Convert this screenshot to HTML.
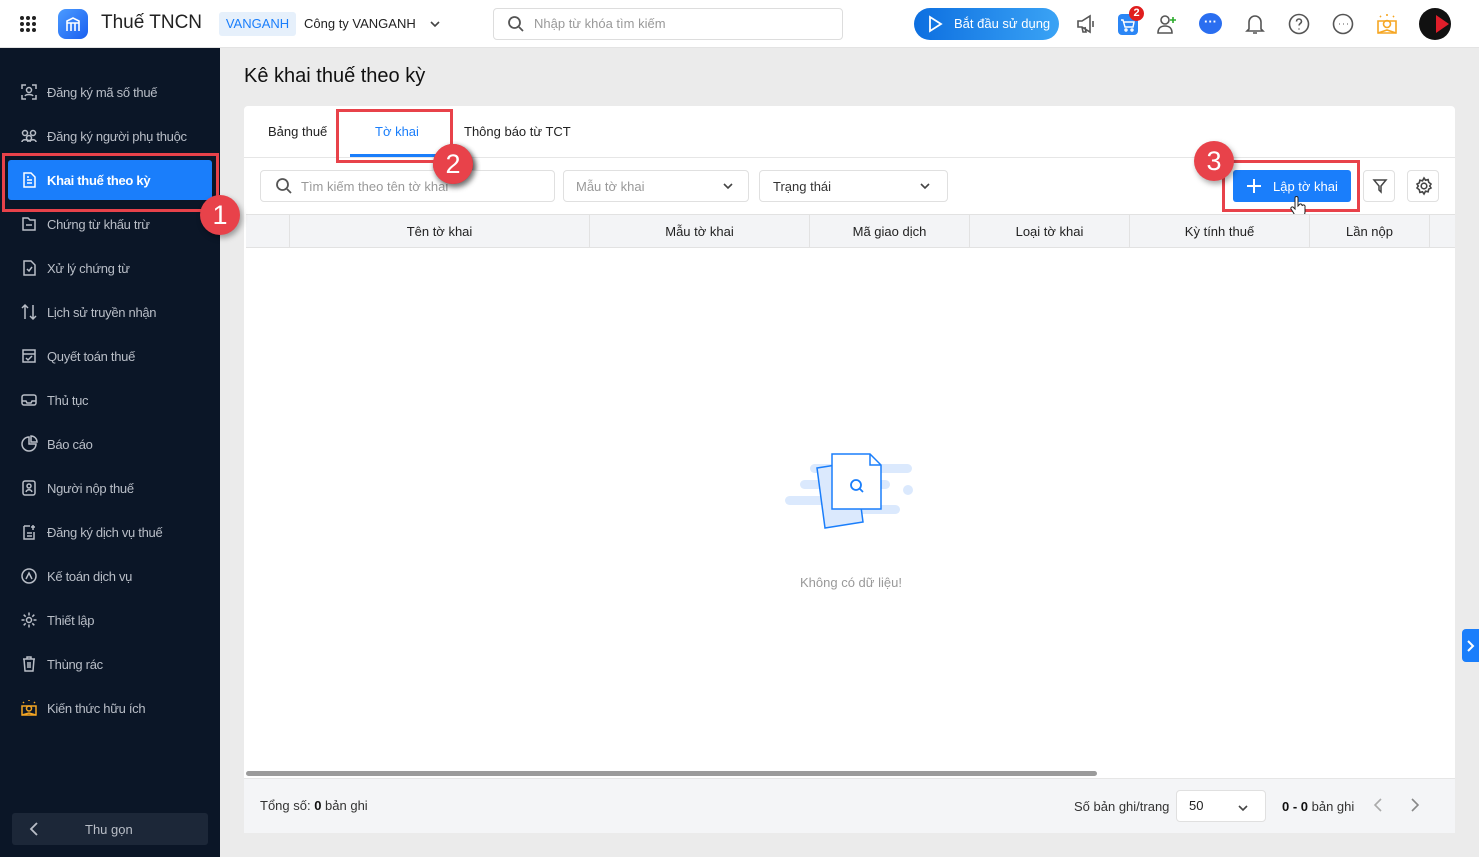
<!DOCTYPE html>
<html><head><meta charset="utf-8"><style>
*{box-sizing:border-box;margin:0;padding:0}
body{width:1479px;height:857px;overflow:hidden;background:#ebebeb;font-family:"Liberation Sans",sans-serif;font-size:13px;color:#222;position:relative}
.abs{position:absolute}
.hdr{left:0;top:0;width:1479px;height:48px;background:#fff;border-bottom:1px solid #e3e3e3}
.side{left:0;top:48px;width:220px;height:809px;background:#0b1627}
.it{position:absolute;left:20px;color:#b9bec7;font-size:13px;display:flex;align-items:center;letter-spacing:-0.3px}
.it svg{width:18px;height:18px;margin-right:9px;fill:none;stroke:#b9bec7;stroke-width:1.5}
.card{left:244px;top:106px;width:1211px;height:727px;background:#fff;border-radius:4px}
.inp{position:absolute;top:170px;height:32px;border:1px solid #e0e0e0;border-radius:4px;background:#fff;color:#999;font-size:13px;display:flex;align-items:center}
.th{position:absolute;top:214px;height:34px;border-left:1px solid #e2e2e2;display:flex;align-items:center;justify-content:center;font-size:13px;color:#222}
.red{position:absolute;border:3px solid #e8424a}
.badge{position:absolute;width:40px;height:40px;border-radius:50%;background:#e8424a;color:#fff;font-size:27px;display:flex;align-items:center;justify-content:center;box-shadow:2px 3px 6px rgba(0,0,0,.35)}
.ic{position:absolute;top:12px;width:24px;height:24px;fill:none;stroke:#555;stroke-width:1.6}
</style></head><body>
<div class="abs hdr"></div>
<!-- grid icon -->
<svg class="abs" style="left:19px;top:15px" width="18" height="18"><g fill="#222"><circle cx="3" cy="3" r="2"/><circle cx="9" cy="3" r="2"/><circle cx="15" cy="3" r="2"/><circle cx="3" cy="9" r="2"/><circle cx="9" cy="9" r="2"/><circle cx="15" cy="9" r="2"/><circle cx="3" cy="15" r="2"/><circle cx="9" cy="15" r="2"/><circle cx="15" cy="15" r="2"/></g></svg>
<div class="abs" style="left:58px;top:9px;width:30px;height:30px;border-radius:8px;background:linear-gradient(135deg,#4b9bff,#1a5ff0)"></div>
<svg class="abs" style="left:64px;top:15px" width="18" height="18" fill="none" stroke="#fff" stroke-width="1.6"><path d="M3 16V6l6-3 6 3v10M7 16V8M11 16V8M3 8h12"/></svg>
<div class="abs" style="left:101px;top:12px;font-size:19px;color:#222">Thuế TNCN</div>
<div class="abs" style="left:219px;top:12px;width:77px;height:24px;background:#e6f0fb;border-radius:3px;color:#1a7efb;font-size:13px;text-align:center;line-height:24px">VANGANH</div>
<div class="abs" style="left:304px;top:16px;font-size:13px;color:#222">Công ty VANGANH</div>
<svg class="abs" style="left:429px;top:18px" width="12" height="12" fill="none" stroke="#444" stroke-width="1.6"><path d="M2 4l4 4 4-4"/></svg>
<div class="abs" style="left:493px;top:8px;width:350px;height:32px;border:1px solid #ddd;border-radius:4px"></div>
<svg class="abs" style="left:507px;top:15px" width="18" height="18" fill="none" stroke="#555" stroke-width="1.8"><circle cx="7.5" cy="7.5" r="5.5"/><path d="M12 12l4 4"/></svg>
<div class="abs" style="left:534px;top:16px;color:#999;font-size:13px">Nhập từ khóa tìm kiếm</div>
<div class="abs" style="left:914px;top:8px;width:145px;height:32px;border-radius:16px;background:linear-gradient(90deg,#0d6fe0,#3aa3f5)"></div>
<svg class="abs" style="left:926px;top:15px" width="18" height="18" fill="none" stroke="#fff" stroke-width="1.8"><path d="M4 2l11 7-11 7z"/></svg>
<div class="abs" style="left:954px;top:16px;color:#fff;font-size:13px">Bắt đầu sử dụng</div>
<svg class="ic" style="left:1075px"><path d="M3 9h4l8-5v16l-8-5H3zM7 15l1 5h3l-1-5M18 9v6"/></svg>
<div class="abs" style="left:1118px;top:14px;width:20px;height:21px;border-radius:4px;background:#2b86f5"></div>
<svg class="abs" style="left:1120px;top:17px" width="16" height="16" fill="none" stroke="#fff" stroke-width="1.4"><path d="M1 3h2l2 7h8l1-5H4"/><circle cx="6" cy="13" r="1"/><circle cx="12" cy="13" r="1"/></svg>
<div class="abs" style="left:1129px;top:6px;width:15px;height:15px;border-radius:50%;background:#e01e1e;color:#fff;font-size:11px;font-weight:bold;text-align:center;line-height:15px">2</div>
<svg class="ic" style="left:1155px"><circle cx="10" cy="8" r="4"/><path d="M3 21c0-5 3-7 7-7s7 2 7 7z"/><path d="M18 5v6M15 8h6" stroke="#2bab2b"/></svg>
<div class="abs" style="left:1199px;top:13px;width:23px;height:21px;border-radius:50%;background:#2a6ef0"></div>
<div class="abs" style="left:1204px;top:14px;color:#fff;font-size:13px;font-weight:bold">···</div>
<svg class="ic" style="left:1243px"><path d="M6 17V10a6 6 0 0112 0v7l2 2H4zM10 21h4"/></svg>
<svg class="ic" style="left:1287px"><circle cx="12" cy="12" r="9.5"/><path d="M9.5 9.5a2.5 2.5 0 115 0c0 2-2.5 2-2.5 4M12 16.5v1"/></svg>
<svg class="ic" style="left:1331px"><circle cx="12" cy="12" r="9.5"/><path d="M8 12h.5M12 12h.5M16 12h.5" stroke-width="2"/></svg>
<svg class="ic" style="left:1375px;stroke:#f5a623"><path d="M3 9h18v12H3zM12 4V2M6 5l-1-1M18 5l1-1"/><circle cx="12" cy="12" r="3.5"/><path d="M3 21l9-3 9 3"/></svg>
<div class="abs" style="left:1419px;top:8px;width:32px;height:32px;border-radius:50%;background:#111;overflow:hidden"><div style="position:absolute;left:17px;top:7px;width:0;height:0;border-left:13px solid #e01e2a;border-top:9px solid transparent;border-bottom:9px solid transparent"></div></div>

<div class="abs side"></div>
<div class="it" style="top:83px"><svg><path d="M2 6V2h4M12 2h4v4M16 12v4h-4M6 16H2v-4"/><circle cx="9" cy="7" r="2.5"/><path d="M5 13c1-2 7-2 8 0"/></svg>Đăng ký mã số thuế</div>
<div class="it" style="top:127px"><svg><circle cx="5" cy="6" r="2.5"/><circle cx="13" cy="6" r="2.5"/><circle cx="9" cy="11" r="2.5"/><path d="M2 15c0-3 6-3 6 0M10 15c0-3 6-3 6 0"/></svg>Đăng ký người phụ thuộc</div>
<div class="abs" style="left:8px;top:160px;width:204px;height:40px;background:#1a7efb;border-radius:3px"></div>
<div class="it" style="top:171px;color:#fff;font-weight:bold"><svg style="stroke:#fff"><path d="M4 2h7l4 4v10H4zM7 9h5M7 12h5M7 6h2"/></svg>Khai thuế theo kỳ</div>
<div class="red" style="left:2px;top:153px;width:217px;height:59px"></div>
<div class="it" style="top:215px"><svg><path d="M3 3h5l2 2h5v10H3zM6 10h6"/></svg>Chứng từ khấu trừ</div>
<div class="it" style="top:259px"><svg><path d="M4 2h7l4 4v10H4zM7 10l2 2 3-4"/></svg>Xử lý chứng từ</div>
<div class="it" style="top:303px"><svg><path d="M5 2v14M2 5l3-3 3 3M13 2v14M10 13l3 3 3-3"/></svg>Lịch sử truyền nhận</div>
<div class="it" style="top:347px"><svg><path d="M3 3h12v12H3zM3 7h12M6 11l2 2 4-4"/></svg>Quyết toán thuế</div>
<div class="it" style="top:391px"><svg><rect x="2" y="4" width="14" height="10" rx="2"/><path d="M2 10h4l1 2h4l1-2h4"/></svg>Thủ tục</div>
<div class="it" style="top:435px"><svg><path d="M9 2a7 7 0 107 7H9z"/><path d="M11 1v6h6a6 6 0 00-6-6z"/></svg>Báo cáo</div>
<div class="it" style="top:479px"><svg><rect x="3" y="2" width="12" height="14" rx="2"/><circle cx="9" cy="7" r="2"/><path d="M6 13c1-3 5-3 6 0"/></svg>Người nộp thuế</div>
<div class="it" style="top:523px"><svg><path d="M4 3h6M4 3v13h10V9M7 10h5M7 13h5M13 2v5M11 4h4"/></svg>Đăng ký dịch vụ thuế</div>
<div class="it" style="top:567px"><svg><circle cx="9" cy="9" r="7"/><path d="M6 12l3-6 3 6"/></svg>Kế toán dịch vụ</div>
<div class="it" style="top:611px"><svg><circle cx="9" cy="9" r="2.5"/><path d="M9 1.5v3M9 13.5v3M1.5 9h3M13.5 9h3M3.7 3.7l2 2M12.3 12.3l2 2M3.7 14.3l2-2M12.3 5.7l2-2"/></svg>Thiết lập</div>
<div class="it" style="top:655px"><svg><path d="M3 4h12M7 4V2h4v2M4 4l1 12h8l1-12M8 7v6M10 7v6"/></svg>Thùng rác</div>
<div class="it" style="top:699px"><svg style="stroke:#f5a623"><path d="M2 7h14v9H2zM9 2V1M4 4L3 3M14 4l1-1"/><circle cx="9" cy="9.5" r="2.5"/><path d="M2 16l7-2 7 2"/></svg>Kiến thức hữu ích</div>
<div class="abs" style="left:12px;top:813px;width:196px;height:32px;background:#1c2738;border-radius:3px"></div>
<svg class="abs" style="left:28px;top:821px" width="14" height="16" fill="none" stroke="#b9bec7" stroke-width="1.8"><path d="M9 2L3 8l6 6"/></svg>
<div class="abs" style="left:85px;top:822px;color:#b9bec7;font-size:13px">Thu gọn</div>

<div class="abs" style="left:244px;top:65px;font-size:20px;color:#111;font-weight:500">Kê khai thuế theo kỳ</div>
<div class="abs card"></div>
<div class="abs" style="left:244px;top:157px;width:1211px;height:1px;background:#e6e6e6"></div>
<div class="abs" style="left:268px;top:124px;font-size:13px">Bảng thuế</div>
<div class="abs" style="left:375px;top:124px;font-size:13px;color:#1a7efb">Tờ khai</div>
<div class="abs" style="left:350px;top:154px;width:94px;height:3px;background:#1a7efb"></div>
<div class="abs" style="left:464px;top:124px;font-size:13px">Thông báo từ TCT</div>
<div class="red" style="left:336px;top:109px;width:117px;height:54px"></div>
<div class="badge" style="left:433px;top:144px">2</div>

<div class="inp" style="left:260px;width:295px"><svg style="margin:0 8px 0 14px" width="18" height="18" fill="none" stroke="#555" stroke-width="1.8"><circle cx="7.5" cy="7.5" r="5.5"/><path d="M12 12l4 4"/></svg>Tìm kiếm theo tên tờ khai</div>
<div class="badge" style="left:433px;top:144px">2</div>
<div class="inp" style="left:563px;width:186px;padding-left:12px">Mẫu tờ khai<svg style="position:absolute;right:14px" width="12" height="12" fill="none" stroke="#444" stroke-width="1.6"><path d="M2 4l4 4 4-4"/></svg></div>
<div class="inp" style="left:759px;width:189px;padding-left:13px;color:#333">Trạng thái<svg style="position:absolute;right:16px" width="12" height="12" fill="none" stroke="#444" stroke-width="1.6"><path d="M2 4l4 4 4-4"/></svg></div>
<div class="abs" style="left:1233px;top:170px;width:118px;height:32px;background:#1a7efb;border-radius:3px"></div>
<svg class="abs" style="left:1246px;top:178px" width="16" height="16" stroke="#fff" stroke-width="2"><path d="M8 1v14M1 8h14"/></svg>
<div class="abs" style="left:1273px;top:179px;color:#fff;font-size:13px">Lập tờ khai</div>
<div class="red" style="left:1222px;top:160px;width:138px;height:52px"></div>
<div class="badge" style="left:1194px;top:141px">3</div>
<svg class="abs" style="left:1290px;top:196px" width="18" height="22" fill="#fff" stroke="#222" stroke-width="1"><path d="M5 2a1.5 1.5 0 013 0v8l1-1a1.5 1.5 0 013 1a1.5 1.5 0 013 1v5c0 3-2 5-5 5H8c-2 0-4-3-5-5l-2-3a1.5 1.5 0 012-2l2 2z"/></svg>
<div class="inp" style="left:1363px;width:32px"><svg style="margin-left:8px" width="16" height="16" fill="none" stroke="#444" stroke-width="1.5"><path d="M2 2h12l-5 6v6l-2-2V8z"/></svg></div>
<div class="inp" style="left:1407px;width:32px"><svg style="margin-left:6px" width="20" height="20" fill="none" stroke="#444" stroke-width="1.6"><circle cx="10" cy="10" r="2.8"/><path d="M10 2l1.5 2.2 2.6-.6.6 2.6L17 8l-1.3 2L17 12l-2.3 1.2-.6 2.6-2.6-.6L10 18l-1.5-2.2-2.6.6-.6-2.6L3 12l1.3-2L3 8l2.3-1.2.6-2.6 2.6.6z"/></svg></div>

<div class="abs" style="left:246px;top:214px;width:1209px;height:34px;background:#f3f4f6;border-top:1px solid #e2e2e2;border-bottom:1px solid #e2e2e2"></div>
<div class="th" style="left:289px;width:300px">Tên tờ khai</div>
<div class="th" style="left:589px;width:220px">Mẫu tờ khai</div>
<div class="th" style="left:809px;width:160px">Mã giao dịch</div>
<div class="th" style="left:969px;width:160px">Loại tờ khai</div>
<div class="th" style="left:1129px;width:180px">Kỳ tính thuế</div>
<div class="th" style="left:1309px;width:120px">Lần nộp</div>
<div class="th" style="left:1429px;width:26px"></div>

<svg class="abs" style="left:785px;top:450px" width="130" height="80">
<g fill="#dbe9fd"><rect x="25" y="14" width="102" height="9" rx="4.5"/><rect x="15" y="30" width="90" height="9" rx="4.5"/><circle cx="123" cy="40" r="5"/><rect x="0" y="46" width="80" height="9" rx="4.5"/><rect x="55" y="55" width="60" height="9" rx="4.5"/></g>
<path d="M32 18l38-6 8 60-38 6z" fill="#dbe9fd" stroke="#1a7efb" stroke-width="1.5"/>
<path d="M47 4h38l11 11v44H47z" fill="#fff" stroke="#1a7efb" stroke-width="1.5"/><path d="M85 4v11h11" fill="none" stroke="#1a7efb" stroke-width="1.5"/>
<circle cx="71" cy="35" r="5" fill="none" stroke="#1a7efb" stroke-width="1.8"/><path d="M75 39l3 3" stroke="#1a7efb" stroke-width="1.8"/>
</svg>
<div class="abs" style="left:800px;top:575px;color:#999;font-size:13px">Không có dữ liệu!</div>

<div class="abs" style="left:246px;top:771px;width:851px;height:5px;background:#9b9b9b;border-radius:3px"></div>
<div class="abs" style="left:244px;top:778px;width:1211px;height:55px;background:#f4f5f7;border-top:1px solid #e6e6e6"></div>
<div class="abs" style="left:260px;top:798px;font-size:13px;color:#333">Tổng số: <b style="color:#111">0</b> bản ghi</div>
<div class="abs" style="left:1074px;top:799px;font-size:13px;color:#333">Số bản ghi/trang</div>
<div class="abs" style="left:1176px;top:790px;width:90px;height:32px;background:#fff;border:1px solid #e0e0e0;border-radius:4px;padding:7px 12px;font-size:13px">50<svg style="position:absolute;right:16px;top:11px" width="12" height="12" fill="none" stroke="#444" stroke-width="1.6"><path d="M2 4l4 4 4-4"/></svg></div>
<div class="abs" style="left:1282px;top:799px;font-size:13px;color:#333"><b style="color:#111">0 - 0</b> bản ghi</div>
<svg class="abs" style="left:1372px;top:797px" width="12" height="16" fill="none" stroke="#aaa" stroke-width="1.6"><path d="M9 2L3 8l6 6"/></svg>
<svg class="abs" style="left:1409px;top:797px" width="12" height="16" fill="none" stroke="#888" stroke-width="1.6"><path d="M3 2l6 6-6 6"/></svg>
<div class="abs" style="left:1462px;top:629px;width:17px;height:33px;background:#1a7efb;border-radius:4px 0 0 4px"></div>
<svg class="abs" style="left:1465px;top:639px" width="10" height="14" fill="none" stroke="#fff" stroke-width="2"><path d="M3 2l5 5-5 5"/></svg>
<div class="red" style="left:336px;top:109px;width:117px;height:54px"></div>
<div class="badge" style="left:433px;top:144px">2</div>
<div class="badge" style="left:200px;top:195px">1</div>
</body></html>
